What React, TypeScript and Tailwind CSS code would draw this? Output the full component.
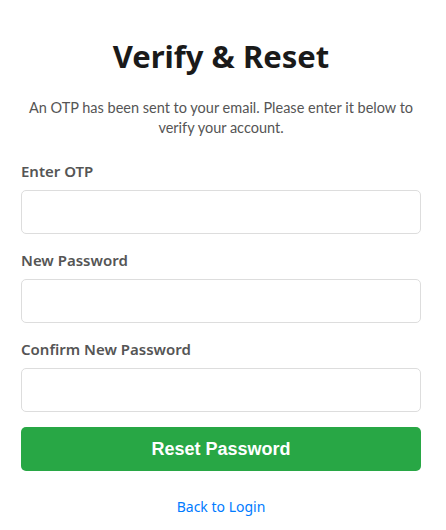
import React from "react";

function Field({ label, type = "text" }: { label: string; type?: string }) {
  return (
    <div className="mb-[15px]">
      <label className="block mb-[8px] text-[15px] leading-[22px] font-semibold text-[#555]">
        {label}
      </label>
      <input
        type={type}
        className="block w-full h-[44px] px-3 border border-[#ddd] rounded-[5px] outline-none text-[14px]"
      />
    </div>
  );
}

export default function App() {
  return (
    <div
      className="bg-white min-h-[530px] pl-[21px] pr-[25px] pt-[34px]"
      style={{ fontFamily: '"Noto Sans", sans-serif' }}
    >
      <h2 className="text-center text-[31px] leading-[44px] font-bold text-[#1a1a1a] mb-[20px]">
        Verify &amp; Reset
      </h2>
      <p
        className="text-center text-[14.5px] leading-[20px] text-[#555] mb-[22px]"
        style={{ fontFamily: "Lato, sans-serif" }}
      >
        An OTP has been sent to your email. Please enter it below to verify your account.
      </p>
      <form onSubmit={(e) => e.preventDefault()}>
        <Field label="Enter OTP" />
        <Field label="New Password" type="password" />
        <Field label="Confirm New Password" type="password" />
        <button
          type="submit"
          className="block w-full h-[44px] mt-[3px] rounded-[5px] bg-[#28a745] text-white text-[18px] font-bold"
          style={{ fontFamily: '"Liberation Sans", Arial, sans-serif' }}
        >
          Reset Password
        </button>
      </form>
      <div className="text-center mt-[23px]">
        <a href="#" className="text-[14px] text-[#007bff]">
          Back to Login
        </a>
      </div>
    </div>
  );
}
